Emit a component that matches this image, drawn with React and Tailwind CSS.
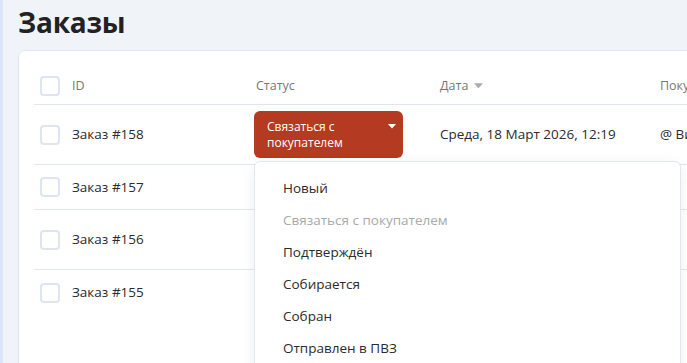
import React from 'react';

const rows = [
  { id: 158, h: 'h-[60px]', status: true, date: 'Среда, 18 Март 2026, 12:19', customer: '@ Ви' },
  { id: 157, h: 'h-[45px]', customer: 'Се' },
  { id: 156, h: 'h-[60px]', customer: 'Зо' },
  { id: 155, h: 'h-[45px]', customer: '', last: true },
];

const options = [
  { label: 'Новый' },
  { label: 'Связаться с покупателем', current: true },
  { label: 'Подтверждён' },
  { label: 'Собирается' },
  { label: 'Собран' },
  { label: 'Отправлен в ПВЗ' },
];

const Caret = ({ className }) => (
  <svg viewBox="0 0 10 6" className={className}>
    <path d="M0 0h10L5 5.5z" fill="currentColor" />
  </svg>
);

const Checkbox = () => (
  <div className="w-[20px] h-[20px] rounded-[4px] border-2 border-[#dfe5f0] bg-white" />
);

const App = () => {
  return (
    <div className="relative w-[687px] h-[363px] overflow-hidden bg-[#f0f4f9] border-l-[3px] border-[#dce6f7] font-['Open_Sans',sans-serif] text-[#2b2b2b]">
      {/* заголовок */}
      <h1 className="pl-[15px] pt-[2px] h-[49px] text-[28px] leading-[40px] font-bold text-[#222] tracking-[-0.2px]">Заказы</h1>

      {/* карточка со списком */}
      <div className="ml-[15px] mt-[1px] w-[820px] h-[340px] bg-white border border-[#e1e6ef] rounded-[7px] pl-[15px] pt-[17px]">
        <div className="grid grid-cols-[38px_182px_186px_220px_200px] h-[37px] items-center border-b border-[#e1e6ef] text-[12.5px] text-[#777]">
          <div className="pl-[6px]"><Checkbox /></div>
          <div>ID</div>
          <div className="pl-[2px]">Статус</div>
          <div className="flex items-center gap-[6px]">
            Дата
            <Caret className="w-[9px] h-[6px] text-[#aaa]" />
          </div>
          <div>Покупатель</div>
        </div>

        {rows.map((r) => (
          <div
            key={r.id}
            className={`grid grid-cols-[38px_182px_186px_220px_200px] items-center ${r.h} ${r.last ? '' : 'border-b border-[#e1e6ef]'} text-[13.5px]`}
          >
            <div className="pl-[6px]"><Checkbox /></div>
            <div>Заказ #{r.id}</div>
            <div className="relative">
              {r.status && (
                <>
                  <button className="flex items-center justify-between w-[149px] h-[47px] rounded-[6px] bg-[#b43a22] pl-[13px] pr-[7px] text-left text-[12px] leading-[16px] text-white">
                    <span>Связаться с<br />покупателем</span>
                    <Caret className="w-[8px] h-[5px] self-start mt-[13px] text-white" />
                  </button>
                  <div className="absolute left-0 top-[50px] z-10 w-[427px] h-[220px] bg-white border border-[#e1e6ef] rounded-[6px] shadow-[0_4px_14px_rgba(30,40,70,0.08)] pt-[10px]">
                    {options.map((o) => (
                      <div
                        key={o.label}
                        className={`h-[32px] flex items-center pl-[28px] text-[13.5px] ${o.current ? 'text-[#a9a9a9]' : 'text-[#2b2b2b]'}`}
                      >
                        {o.label}
                      </div>
                    ))}
                  </div>
                </>
              )}
            </div>
            <div>{r.date}</div>
            <div>{r.customer}</div>
          </div>
        ))}
      </div>
    </div>
  );
};

export default App;
